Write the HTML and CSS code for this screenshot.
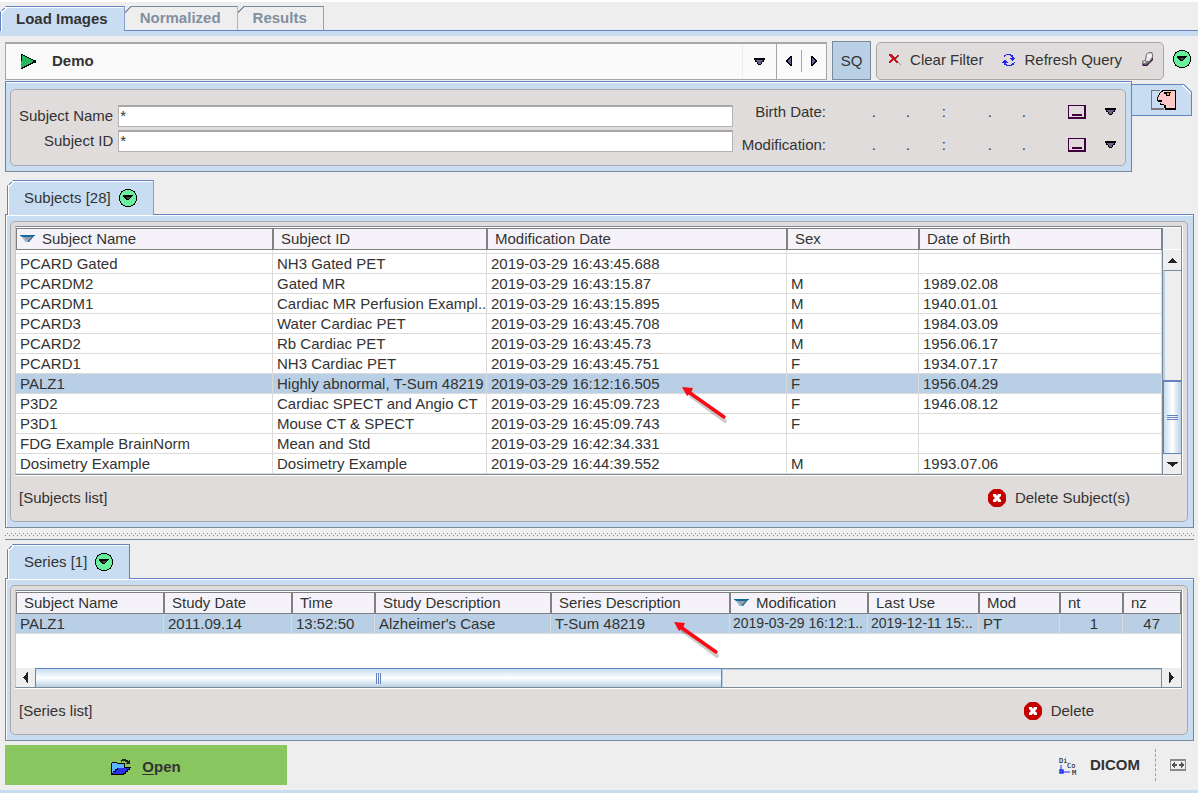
FILE: index.html
```html
<!DOCTYPE html>
<html lang="en">
<head>
<meta charset="utf-8">
<title>Load Images</title>
<link rel="stylesheet" href="styles.css">
</head>
<body>
<svg class="defs" width="0" height="0" aria-hidden="true">
  <symbol id="tri-down" viewBox="0 0 11 7"><path d="M0 0h11v2h-1v2h-2v2h-1v1h-3v-1h-1v-2h-2v-2h-1z" fill="#000"/><path d="M2 2h7v1h-1v1h-1v2h-3v-2h-1v-1h-1z" fill="#62628c"/></symbol>
  <symbol id="round-down" viewBox="0 0 18 18"><path d="M6 0h6v1h2v1h2v2h1v2h1v6h-1v2h-1v2h-2v1h-2v1h-6v-1h-2v-1h-2v-2h-1v-2h-1v-6h1v-2h1v-2h2v-1h2z" fill="#000"/><path d="M6 1h6v1h2v1h1v1h1v2h1v6h-1v2h-1v1h-1v1h-2v1h-6v-1h-2v-1h-1v-1h-1v-2h-1v-6h1v-2h1v-1h1v-1h2z" fill="#69f09c"/><path d="M4 6h10v1h-1v1h-1v1h-1v1h-1v1h-3v-1h-1v-1h-1v-1h-1v-1h-0z" fill="#000"/><path d="M7 8h4v1h-1v1h-2v-1h-1z" fill="#445"/></symbol>
  <symbol id="sort" viewBox="0 0 15 8"><path d="M0 0h15v1h-1l-5 6h-3l-5-6h-1z" fill="#13689c"/><path d="M3 2h9l-4 4h-1z" fill="#9a98a4"/><path d="M2 2h1l5 5h-1z" fill="#fff"/></symbol>
  <symbol id="date" viewBox="0 0 18 14"><path d="M0 0h18v14h-18zM1 1v11h15v-11z" fill="#400040" fill-rule="evenodd"/><path d="M4 9h10v2h-10z" fill="#400040"/></symbol>
  <symbol id="delete" viewBox="0 0 18 18"><path d="M6 0h6l2 1 3 3 1 2v6l-1 2-3 3-2 1h-6l-2-1-3-3-1-2v-6l1-2 3-3z" fill="#c40000"/><path d="M5 5h3l1 2 1-2h3v2l-2 2 2 2v2h-3l-1-2-1 2h-3v-2l2-2-2-2z" fill="#fff"/></symbol>
  <symbol id="arrow" viewBox="0 0 50 44"><path d="M9 10l34 25" stroke="#000" stroke-opacity=".2" stroke-width="4" stroke-linecap="round"/><path d="M8 7l34 24" stroke="#fa0a14" stroke-width="3.4" stroke-linecap="round"/><path d="M0 1l11 1-2 5-4 3z" fill="#fa0a14"/></symbol>
</svg>

<nav class="tabs main-tabs">
  <button class="tab active" type="button">Load Images</button>
  <button class="tab" type="button">Normalized</button>
  <button class="tab" type="button">Results</button>
</nav>

<main class="content">
  <div class="toolbar">
    <div class="combo">
      <svg class="px" width="15" height="15" viewBox="0 0 15 15"><path d="M0 0h2v1h2v1h2v1h2v1h2v1h2v1h3v3h-3v1h-2v1h-2v1h-2v1h-2v1h-2v1h-2z" fill="#000"/><path d="M1 1h1v1h2v1h2v1h2v1h2v1h2v2h-1v1h-2v1h-2v1h-2v1h-2v1h-2v1h-1z" fill="#24b75e"/></svg>
      <select class="combo-select" aria-label="Database"><option>Demo</option></select>
      <span class="combo-arrow"><svg class="px" width="11" height="7"><use href="#tri-down"/></svg></span>
      <button class="step" type="button" aria-label="Previous"><svg class="px" width="6" height="10" viewBox="0 0 6 10"><path d="M4 0h2v10h-2v-1h-1v-1h-1v-1h-1v-1h-1v-2h1v-1h1v-1h1v-1h1z"/><path d="M4 2h1v6h-1v-1h-1v-1h-1v-2h1v-1h1z" fill="#62628c"/></svg></button>
      <button class="step next" type="button" aria-label="Next"><svg class="px" width="6" height="10" viewBox="0 0 6 10"><path d="M2 0h-2v10h2v-1h1v-1h1v-1h1v-1h1v-2h-1v-1h-1v-1h-1v-1h-1z"/><path d="M2 2h-1v6h1v-1h1v-1h1v-2h-1v-1h-1z" fill="#62628c"/></svg></button>
    </div>
    <button class="sq" type="button">SQ</button>
    <div class="actions">
      <button class="action" type="button"><svg class="px" width="12" height="11" viewBox="0 0 12 11"><path d="M6 5l6 6M6 6l4-4" stroke="#8d8d8d"/><path d="M0 0h3v1h1v1h1v1h2v-1h1v-1h2v1h-1v1h-1v1h-1v2h1v1h1v2h-2v-1h-1v-1h-1v-1h-1v1h-1v1h-1v1h-2v-2h1v-1h1v-1h1v-1h-1v-1h-1v-1h-1v-1h-1z" fill="#c01820"/></svg>Clear Filter</button>
      <button class="action" type="button"><svg class="px" width="13" height="12" viewBox="0 0 13 12" fill="#2525f0"><path d="M4 0h5v1h2v2h1v1h1v1h-1v1h-1v1h-1v-1h-1v-1h-1v-1h2v-1h-1v-1h-1v-1h-4v1h-1v1h-1v-2h1z"/><path d="M9 12h-5v-1h-2v-2h-2v-1h1v-1h1v-1h2v1h1v1h1v1h-2v1h1v1h4v-1h1v-1h2v-1h1v1h-1v2h-2z"/></svg>Refresh Query</button>
      <button class="action" type="button" aria-label="Erase"><svg width="13" height="15" viewBox="0 0 13 15"><path d="M1 12l1 2h4l3-3 3-3v-5l-4 5z" fill="#3c0a44"/><path d="M5 2l3-2h3l1 2v4l-3 4-4 3-4-1v-3l3-1z" fill="#777"/><path d="M6 2l3-1 2 1v3l-3 4-3 0zM2 10l2-1 1 2-2 0z" fill="#eee"/></svg></button>
    </div>
    <button class="icon-button" type="button" aria-label="More"><svg class="px" width="18" height="18"><use href="#round-down"/></svg></button>
  </div>

  <section class="filter">
    <div class="frame filter-frame">
      <div class="inner filter-inner">
        <div class="names">
          <label for="sname">Subject Name</label><input id="sname" type="text" value="*">
          <label for="sid">Subject ID</label><input id="sid" type="text" value="*">
        </div>
        <div class="dates">
          <span class="date-label">Birth Date:</span><span>.</span><span>.</span><span>:</span><span>.</span><span>.</span>
          <button type="button" class="bare" aria-label="Birth date calendar"><svg class="px" width="18" height="14"><use href="#date"/></svg></button>
          <button type="button" class="bare" aria-label="Birth date options"><svg class="px" width="11" height="7"><use href="#tri-down"/></svg></button>
          <span class="date-label">Modification:</span><span>.</span><span>.</span><span>:</span><span>.</span><span>.</span>
          <button type="button" class="bare" aria-label="Modification calendar"><svg class="px" width="18" height="14"><use href="#date"/></svg></button>
          <button type="button" class="bare" aria-label="Modification options"><svg class="px" width="11" height="7"><use href="#tri-down"/></svg></button>
        </div>
      </div>
    </div>
    <button class="side-tab" type="button" aria-label="Patient"><svg class="px" width="25" height="20" viewBox="0 0 25 20"><path d="M9 0h-9v20h13v-2h-12v-17h8z" fill="#777"/><path d="M11 0h14v20h-11v-2h-1v-3h-4v-2h1v-1h-3v-1h-1v-4h1v-2h1v-2h1v-1h1v-1h1z" fill="#000"/><path d="M12 1h12v17h-9v-3h-2v-1h-3v-2h1v-2h-4v-3h1v-2h1v-2h1v-1h2z" fill="#ffc9c9"/><path d="M13 2h7v1h-1v3h-4v-2h-2z" fill="#000"/><path d="M16 3h2v2h-2z" fill="#e8b000"/></svg></button>
  </section>

  <section class="block subjects">
    <div class="tabs"><button class="tab active" type="button">Subjects [28]<svg class="px" width="18" height="18"><use href="#round-down"/></svg></button></div>
    <div class="frame tabbed">
      <div class="inner">
        <div class="view subject-view">
          <table>
            <colgroup><col class="w257"><col class="w214"><col class="w300"><col class="w132"><col></colgroup>
            <thead><tr><th class="sorted"><svg width="15" height="8"><use href="#sort"/></svg>Subject Name</th><th>Subject ID</th><th>Modification Date</th><th>Sex</th><th>Date of Birth</th></tr></thead>
            <tbody>
              <tr class="sliver"><td></td><td></td><td></td><td></td><td></td></tr>
              <tr><td>PCARD Gated</td><td>NH3 Gated PET</td><td>2019-03-29 16:43:45.688</td><td></td><td></td></tr>
              <tr><td>PCARDM2</td><td>Gated MR</td><td>2019-03-29 16:43:15.87</td><td>M</td><td>1989.02.08</td></tr>
              <tr><td>PCARDM1</td><td>Cardiac MR Perfusion Exampl..</td><td>2019-03-29 16:43:15.895</td><td>M</td><td>1940.01.01</td></tr>
              <tr><td>PCARD3</td><td>Water Cardiac PET</td><td>2019-03-29 16:43:45.708</td><td>M</td><td>1984.03.09</td></tr>
              <tr><td>PCARD2</td><td>Rb Cardiac PET</td><td>2019-03-29 16:43:45.73</td><td>M</td><td>1956.06.17</td></tr>
              <tr><td>PCARD1</td><td>NH3 Cardiac PET</td><td>2019-03-29 16:43:45.751</td><td>F</td><td>1934.07.17</td></tr>
              <tr class="selected"><td>PALZ1</td><td>Highly abnormal, T-Sum 48219</td><td>2019-03-29 16:12:16.505</td><td>F</td><td>1956.04.29</td></tr>
              <tr><td>P3D2</td><td>Cardiac SPECT and Angio CT</td><td>2019-03-29 16:45:09.723</td><td>F</td><td>1946.08.12</td></tr>
              <tr><td>P3D1</td><td>Mouse CT &amp; SPECT</td><td>2019-03-29 16:45:09.743</td><td>F</td><td></td></tr>
              <tr><td>FDG Example BrainNorm</td><td>Mean and Std</td><td>2019-03-29 16:42:34.331</td><td></td><td></td></tr>
              <tr><td>Dosimetry Example</td><td>Dosimetry Example</td><td>2019-03-29 16:44:39.552</td><td>M</td><td>1993.07.06</td></tr>
            </tbody>
          </table>
          <div class="vbar">
            <div class="corner"></div>
            <button class="scroll" type="button" aria-label="Scroll up"><svg class="px" width="9" height="5" viewBox="0 0 9 5"><path d="M4 0h1v1h1v1h1v1h1v1h1v1h-9v-1h1v-1h1v-1h1v-1h1z" fill="#222"/></svg></button>
            <div class="track"></div>
            <div class="thumb"><i></i><i></i><i></i></div>
            <button class="scroll" type="button" aria-label="Scroll down"><svg class="px" width="11" height="5" viewBox="0 0 11 5"><path d="M0 0h11v1h-1v1h-2v1h-1v1h-1v1h-1v-1h-1v-1h-1v-1h-2v-1h-1z" fill="#222"/></svg></button>
          </div>
          <svg class="pointer on-subject" width="50" height="44" fill="none"><use href="#arrow"/></svg>
        </div>
        <div class="foot"><span>[Subjects list]</span><button class="action remove-subject" type="button"><svg width="18" height="18"><use href="#delete"/></svg>Delete Subject(s)</button></div>
      </div>
    </div>
  </section>

  <div class="splitter"></div>

  <section class="block series">
    <div class="tabs"><button class="tab active" type="button">Series [1]<svg class="px" width="18" height="18"><use href="#round-down"/></svg></button></div>
    <div class="frame tabbed">
      <div class="inner">
        <div class="view series-view">
          <table>
            <colgroup><col class="w148"><col class="w128"><col class="w83"><col class="w176"><col class="w179"><col class="w138"><col class="w111"><col class="w81"><col class="w63"><col></colgroup>
            <thead><tr><th>Subject Name</th><th>Study Date</th><th>Time</th><th>Study Description</th><th>Series Description</th><th class="sorted"><svg width="15" height="8"><use href="#sort"/></svg>Modification</th><th>Last Use</th><th>Mod</th><th>nt</th><th>nz</th></tr></thead>
            <tbody><tr class="selected"><td>PALZ1</td><td>2011.09.14</td><td>13:52:50</td><td>Alzheimer's Case</td><td>T-Sum 48219</td><td class="stamp">2019-03-29 16:12:1..</td><td class="stamp">2019-12-11 15:..</td><td>PT</td><td class="num">1</td><td class="num">47</td></tr></tbody>
          </table>
          <div class="hbar">
            <button class="scroll" type="button" aria-label="Scroll left"><svg class="px" width="5" height="11" viewBox="0 0 5 11"><path d="M4 0h1v11h-1v-1h-1v-2h-1v-1h-1v-1h-1v-1h1v-1h1v-1h1v-2h1z" fill="#222"/></svg></button>
            <div class="thumb"><i></i><i></i><i></i></div>
            <div class="track"></div>
            <button class="scroll" type="button" aria-label="Scroll right"><svg class="px" width="5" height="11" viewBox="0 0 5 11"><path d="M1 0h-1v11h1v-1h1v-2h1v-1h1v-1h1v-1h-1v-1h-1v-1h-1v-2h-1z" fill="#222"/></svg></button>
          </div>
          <svg class="pointer on-series" width="50" height="44" fill="none"><use href="#arrow"/></svg>
        </div>
        <div class="foot"><span>[Series list]</span><button class="action remove-series" type="button"><svg width="18" height="18"><use href="#delete"/></svg>Delete</button></div>
      </div>
    </div>
  </section>
</main>

<footer class="bottom">
  <button class="open" type="button"><svg class="px" width="20" height="16" viewBox="0 0 20 16"><path d="M0 4h1v-1h5v1h8v4h6v1h-1v2h-2v2h-2v2h-2v1h-13z" fill="#000"/><path d="M1 4h5v1h7v4h-7v1h-2v2h-2v2h-1z" fill="#5ab4ff"/><path d="M7 9h11v1h-2v2h-2v2h-2v1h-10v-2h3v-2h2z" fill="#2733e8"/><path d="M10 1h1v-1h4v1h2v1h1v-1h1v4h-4v-1h1v-1h-2v-1h-3v1h-1z" fill="#222"/></svg><span><u>O</u>pen</span></button>
  <button class="dicom" type="button"><svg width="20" height="19" viewBox="0 0 20 19" class="dicom-icon"><path d="M2 9v7h9" fill="none" stroke="#1a2cf0"/><path d="M1 14h3v3h-3z" fill="none" stroke="#1a2cf0" stroke-width="1.4"/><text x="0" y="7">Di</text><text x="8" y="12">Co</text><text x="13" y="19">M</text></svg>DICOM</button>
  <button class="expand" type="button" aria-label="Expand"><svg class="px" width="16" height="12" viewBox="0 0 16 12"><path d="M0 0h16v12h-16zM1 2v8h14v-8z" fill="#8a8a8a" fill-rule="evenodd"/><path d="M1 6h1v-1h1v-1h1v-1h1v2h2v2h-2v2h-1v-1h-1v-1h-1v-1h-1zM15 6h-1v-1h-1v-1h-1v-1h-1v2h-2v2h2v2h1v-1h1v-1h1v-1h1z" fill="#555"/></svg></button>
</footer>
</body>
</html>
```

FILE: styles.css
```css
:root {
  --bg: #eeeeee;
  --blue: #c8ddf2;
  --line: #6382bf;
  --steel: #7a8a99;
  --panel: #dfdcdb;
  --pick: #b8cfe5;
  --ink: #333333;
}

* { box-sizing: border-box; }

body {
  margin: 0;
  min-height: 100vh;
  display: flex;
  flex-direction: column;
  background: var(--bg);
  color: var(--ink);
  font: 15px/20px "Liberation Sans", Arial, sans-serif;
  border-top: 2px solid #ffffff;
  border-bottom: 3px solid var(--blue);
}

button, input, select { font: inherit; color: inherit; margin: 0; }
button { border: 0; padding: 0; background: none; }
svg { display: block; flex: none; }
.defs { position: absolute; }
.px { shape-rendering: crispEdges; }

/* Tabs */
.tabs { display: flex; align-items: flex-end; }
.tab {
  display: flex;
  align-items: center;
  gap: 8px;
  border: 1px solid var(--steel);
  border-bottom: 0;
  border-left-color: transparent;
  clip-path: polygon(6px 0, 100% 0, 100% 100%, 0 100%, 0 6px);
  background: linear-gradient(135deg, var(--steel) 0 5px, transparent 5px) border-box;
}
.tab.active {
  border-color: var(--line);
  background: linear-gradient(135deg, var(--line) 0 5px, #ffffff 5px 7px, transparent 7px) border-box, var(--blue);
  box-shadow: inset 1px 1px 0 #ffffff;
}
.main-tabs {
  padding-top: 4px;
  border-bottom: 5px solid var(--blue);
  box-shadow: inset 0 -1px 0 var(--line);
}
.main-tabs .tab {
  height: 25px;
  padding: 0 16px 2px 14px;
  font-weight: bold;
  color: #8090a0;
}
.main-tabs .tab.active { color: var(--ink); padding: 0 16px 0 15px; }

.content { flex: 1; display: flex; flex-direction: column; padding: 5px 4px 4px 5px; }

/* Toolbar */
.toolbar { display: flex; align-items: center; height: 39px; gap: 5px; }
.combo {
  flex: 1;
  display: flex;
  align-items: center;
  height: 38px;
  padding-left: 15px;
  border: 1px solid #a9a6a6;
  border-top-width: 2px;
  background: #fafafa;
}
.combo-select {
  flex: 1;
  appearance: none;
  border: 0;
  padding: 0 0 0 16px;
  background: none;
  font-weight: bold;
}
.combo-arrow { width: 34px; height: 35px; display: grid; place-items: center; border-left: 1px solid #eeeeee; }
.step { width: 25px; height: 35px; display: grid; place-items: center; border-left: 1px solid #a9a6a6; }
.step.next { height: 22px; }
.sq { width: 39px; height: 39px; border: 1px solid var(--steel); background: var(--pick); }
.actions {
  display: flex;
  align-items: center;
  gap: 19px;
  height: 38px;
  padding: 0 9px 2px 12px;
  border: 1px solid #a9a6a6;
  border-radius: 5px;
  background: var(--panel);
}
.action { display: flex; align-items: center; gap: 9px; }
.icon-button { margin: 0 3px 3px 4px; }

/* Framed panels */
.frame { padding: 7px 5px 5px 4px; border: 1px solid var(--line); border-bottom-color: var(--steel); background: var(--blue); }
.inner { border: 1px solid #aba8a8; border-radius: 5px; background: var(--panel); }

.filter { display: flex; align-items: flex-start; margin-top: 1px; padding-right: 2px; }
.filter-frame { flex: 1; min-width: 0; box-shadow: inset 0 1px 0 #ffffff; }
.filter-inner { display: flex; gap: 10px; padding: 5px 9px 4px 8px; }
.names {
  flex: 1;
  display: grid;
  grid-template-columns: auto 1fr;
  align-content: center;
  align-items: center;
  gap: 3px 5px;
  text-align: right;
}
.names input {
  width: 100%;
  height: 22px;
  padding: 0 1px 2px;
  border: 1px solid #b5b2b2;
  border-top: 2px solid #a9a6a6;
  background: #ffffff;
}
.dates {
  display: grid;
  grid-template-columns: 83px 50px 34px 36px 46px 34px 60px 30px;
  grid-auto-rows: 33px;
  align-items: center;
  justify-items: end;
}
.date-label { white-space: nowrap; }
.side-tab {
  width: 60px;
  height: 32px;
  margin-top: 3px;
  padding-left: 4px;
  display: grid;
  place-items: center;
  border: 1px solid var(--line);
  border-left: 0;
  clip-path: polygon(0 0, calc(100% - 8px) 0, 100% 8px, 100% 100%, 0 100%);
  background: linear-gradient(225deg, var(--line) 0 7px, #ffffff 7px 8px, transparent 8px) border-box, var(--blue);
}

/* Subject and series blocks */
.block { display: flex; flex-direction: column; }
.block .tabs { padding-left: 2px; margin-bottom: -1px; position: relative; z-index: 1; }
.block .tab { height: 35px; padding: 0 16px 0 16px; }
.subjects { flex: 1; margin-top: 8px; }
.tabbed { flex: 1; display: flex; flex-direction: column; padding-top: 6px; box-shadow: inset 1px 1px 0 #ffffff; }
.tabbed .inner { flex: 1; display: flex; flex-direction: column; padding: 4px 5px 0 4px; }
.view { position: relative; border: 1px solid var(--steel); border-left-color: #c8c8c8; background: #ffffff; box-shadow: 0 1px 0 #ffffff, 1px 0 0 #ffffff; }
.subject-view { display: flex; padding-top: 1px; }
.series-view { padding-top: 1px; }

table { flex: 1; width: 100%; table-layout: fixed; border-collapse: separate; border-spacing: 0; }
th {
  height: 22px;
  padding: 0 0 0 7px;
  border: 1px solid #808080;
  background: #f5f3f9;
  font-weight: normal;
  line-height: 20px;
  text-align: left;
  white-space: nowrap;
}
th.sorted svg { display: inline-block; margin: 0 7px 2px -4px; vertical-align: middle; }
td {
  height: 20px;
  padding: 0 0 0 4px;
  border-right: 1px solid #dddada;
  border-bottom: 1px solid #dddada;
  line-height: 19px;
  white-space: nowrap;
  overflow: hidden;
}
.sliver td { height: 4px; }
.selected td { background: var(--pick); }
td.stamp { padding-left: 3px; font-size: 14px; }
td.num { padding-right: 24px; text-align: right; }
td.num:last-child { padding-right: 20px; }

.w63 { width: 63px; }
.w81 { width: 81px; }
.w83 { width: 83px; }
.w111 { width: 111px; }
.w128 { width: 128px; }
.w132 { width: 132px; }
.w138 { width: 138px; }
.w148 { width: 148px; }
.w176 { width: 176px; }
.w179 { width: 179px; }
.w214 { width: 214px; }
.w257 { width: 257px; }
.w300 { width: 300px; }

/* Scroll bars */
.scroll { display: grid; place-items: center; flex: none; background: var(--bg); }
.thumb { display: flex; align-items: center; justify-content: center; gap: 1px; border: 1px solid var(--line); }
.thumb i { background: var(--line); }
.vbar { width: 19px; display: flex; flex-direction: column; border-left: 1px solid var(--steel); background: var(--bg); }
.corner { height: 22px; border-bottom: 1px solid #ffffff; }
.vbar .scroll { height: 20px; }
.vbar .track { flex: 112; border-top: 1px solid var(--steel); border-left: 2px solid var(--pick); }
.vbar .thumb { flex: 73; flex-direction: column; border-top-width: 2px; border-right: 0; background: linear-gradient(90deg, #c8ddf2, #ffffff 50%, #b8cfe5); }
.vbar .thumb i { width: 11px; height: 1px; }
.hbar { height: 19px; margin-top: 34px; display: flex; background: var(--bg); }
.hbar .scroll { width: 19px; }
.hbar .thumb { flex: 687; border-bottom: 0; background: linear-gradient(180deg, #c8ddf2, #ffffff 50%, #b8cfe5); }
.hbar .thumb i { width: 1px; height: 11px; }
.hbar .track { flex: 440; border: 1px solid var(--steel); border-left: 0; border-bottom: 0; box-shadow: inset 1px 1px 0 var(--pick); }

.foot { flex: 1; display: flex; align-items: center; justify-content: space-between; min-height: 46px; padding: 0 52px 0 4px; }
.remove-series { margin-right: 36px; }

.pointer { position: absolute; pointer-events: none; }
.on-subject { left: 666px; top: 159px; }
.on-series { left: 658px; top: 30px; }

.splitter {
  height: 12px;
  margin-bottom: 4px;
  border-bottom: 1px solid var(--steel);
  background:
    conic-gradient(at 1px 1px, transparent 75%, #7a8a99 0) 2px 5px / 4px 4px,
    conic-gradient(at 1px 1px, transparent 75%, #7a8a99 0) 0 3px / 4px 4px;
  background-clip: content-box;
  padding: 4px 0 2px;
}

/* Bottom bar */
.bottom { display: flex; align-items: center; padding: 0 12px 5px 5px; font-weight: bold; }
.bottom button { font-weight: bold; }
.open { width: 282px; height: 40px; padding-top: 3px; display: flex; align-items: center; justify-content: center; gap: 11px; background: #8ac65f; }
.open u { text-underline-offset: 2px; }
.dicom { display: flex; align-items: center; gap: 11px; margin-left: auto; }
.dicom-icon { font: 7px "DejaVu Sans Mono", monospace; fill: #000000; }
.expand { height: 32px; margin-left: 15px; padding-left: 14px; border-left: 1px dashed #a0a0a0; }
```
